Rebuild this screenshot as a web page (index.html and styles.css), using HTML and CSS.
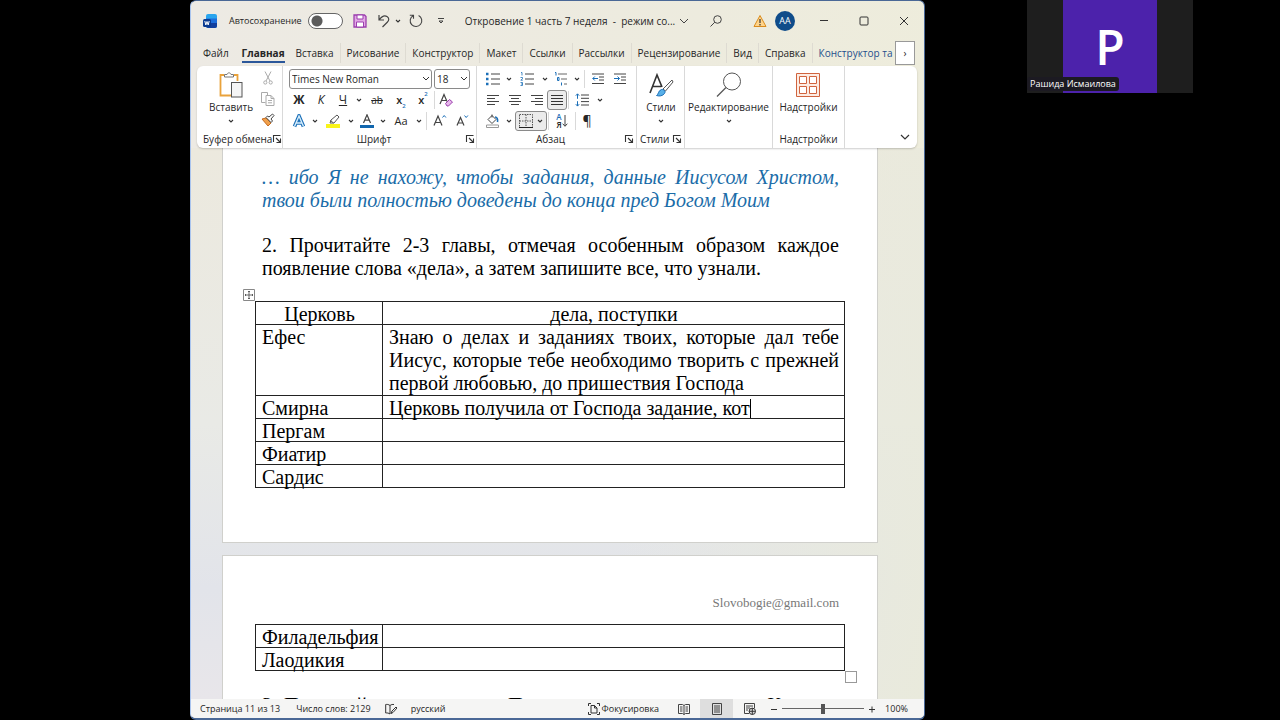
FILE: index.html
```html
<!DOCTYPE html>
<html lang="ru">
<head>
<meta charset="utf-8">
<title>Откровение 1 часть 7 неделя</title>
<link rel="stylesheet" href="styles.css">
</head>
<body>
<svg class="defs" aria-hidden="true">
  <symbol id="chev" viewBox="0 0 6 6"><path d="M1 2l2 2 2-2" fill="none" stroke="#333" stroke-width="1.1"/></symbol>
  <symbol id="launch" viewBox="0 0 10 10"><path d="M1.5 8V1.500H8.500M4 4l4 4M8.500 4.500v4h-4" fill="none" stroke="#333" stroke-width="1.1"/></symbol>
</svg>
<div class="screen">
<main class="window">
  <header class="titlebar">
    <svg class="app-logo" viewBox="0 0 14 14"><rect x="3" width="11" height="14" rx="2" fill="#2aa5ee"/><path d="M3 4.500h11V9H3z" fill="#1e6fdc"/><path d="M3 9h11v3a2 2 0 0 1-2 2H5a2 2 0 0 1-2-2z" fill="#123f9e"/><rect y="5" width="8" height="8" rx="1.500" fill="#0b3b91"/><path d="M1.800 7l1 4L4 7.500 5.200 11l1-4" fill="none" stroke="#fff"/></svg>
    <label class="autosave" for="autosave">Автосохранение</label>
    <input class="switch" type="checkbox" id="autosave">
    <button class="tb save" aria-label="Сохранить"><svg width="14" height="14" viewBox="0 0 14 14"><path d="M1 1h10.500L13 2.500V13H1z" fill="#e3a7e6" stroke="#9b3fae" stroke-width="1.300"/><path d="M4 1h6v4H4zM3.500 8h7v5h-7z" fill="#fff" stroke="#9b3fae"/></svg></button>
    <button class="tb undo" aria-label="Отменить"><svg width="14" height="14" viewBox="0 0 14 14"><path d="M2 1v5h5M2.300 5.700C5 2 8 1.200 10 2.500c2.500 1.700 2 4 .5 5.500L5.500 13" fill="none" stroke="#444" stroke-width="1.200"/></svg><svg width="6" height="6"><use href="#chev"/></svg></button>
    <button class="tb redo" aria-label="Повторить"><svg width="14" height="14" viewBox="0 0 14 14"><path d="M9.600 1.500A5.800 5.800 0 1 1 4 1.700M.8 1.300h3.700v3.500" fill="none" stroke="#444" stroke-width="1.100"/></svg></button>
    <button class="tb more" aria-label="Настройка панели"><svg width="8" height="8" viewBox="0 0 8 8"><path d="M1 1.500h6M2 4l2 2 2-2z" fill="none" stroke="#444"/></svg></button>
    <h1 class="doc-title">Откровение 1 часть 7 неделя &nbsp;-&nbsp; режим со...</h1>
    <svg class="title-chev" width="10" height="6" viewBox="0 0 10 6"><path d="M1 1l4 4 4-4" fill="none" stroke="#444"/></svg>
    <button class="tb search" aria-label="Поиск"><svg width="12" height="12" viewBox="0 0 12 12"><circle cx="7.500" cy="4.500" r="3.800" fill="none" stroke="#444"/><path d="M4.800 7.200L.5 11.500" stroke="#444"/></svg></button>
    <svg class="warn" width="14" height="14" viewBox="0 0 14 14"><path d="M7 1.500L13 12.500H1z" fill="#ffd48a" stroke="#d98b1d"/><path d="M7 5v4M7 10v1.500" stroke="#333" stroke-width="1.200"/></svg>
    <span class="avatar">АА</span>
    <div class="win-buttons">
      <button class="tb" aria-label="Свернуть"><svg width="10" height="10" viewBox="0 0 10 10"><path d="M1 4.500h8" stroke="#333"/></svg></button>
      <button class="tb" aria-label="Развернуть"><svg width="10" height="10" viewBox="0 0 10 10"><rect x="1" y="1" width="8" height="8" rx="1" fill="none" stroke="#333"/></svg></button>
      <button class="tb" aria-label="Закрыть"><svg width="10" height="10" viewBox="0 0 10 10"><path d="M1 1l8 8M9 1L1 9" stroke="#333"/></svg></button>
    </div>
  </header>

  <nav class="tabs">
    <button class="tab">Файл</button><button class="tab active"><span>Главная</span></button><button class="tab">Вставка</button><button class="tab">Рисование</button><button class="tab">Конструктор</button><button class="tab">Макет</button><button class="tab">Ссылки</button><button class="tab">Рассылки</button><button class="tab">Рецензирование</button><button class="tab">Вид</button><button class="tab">Справка</button><button class="tab context">Конструктор та</button>
    <button class="scroll" aria-label="Дальше">›</button>
  </nav>

  <section class="ribbon">
    <div class="group clipboard">
      <div class="group-body">
        <button class="big"><svg width="24" height="26" viewBox="0 0 24 26"><path d="M5 3H1.500v20.500H12M15 3h3.500v6" fill="none" stroke="#e9a23b" stroke-width="1.800"/><path d="M5.500 5V2.500H8C8.500.3 11.500.3 12 2.500h2.500V5z" fill="#fff" stroke="#777"/><rect x="12.500" y="10.500" width="10.500" height="14.500" fill="#f5f5f5" stroke="#555"/></svg><span>Вставить</span><svg class="big-chev" width="6" height="6"><use href="#chev"/></svg></button>
        <div class="stack">
          <button class="ic w24" aria-label="Вырезать"><svg width="10" height="14" viewBox="0 0 10 14"><path d="M2 .5l5 9.500M8 .5L3 10" stroke="#aaa"/><circle cx="2.300" cy="11.500" r="1.600" fill="none" stroke="#aaa"/><circle cx="7.700" cy="11.500" r="1.600" fill="none" stroke="#aaa"/></svg></button>
          <button class="ic w24" aria-label="Копировать"><svg width="14" height="14" viewBox="0 0 14 14"><path d="M4.500 10.500h-4V.5h6v3M5 3.500h5l3 3v7H5zM10 3.500v3h3M7 8.500h4M7 10.800h4" fill="none" stroke="#aaa"/></svg></button>
          <button class="ic w24" aria-label="Формат по образцу"><svg width="14" height="14" viewBox="0 0 14 14"><path d="M1 6l6 7 3-3-5-5z" fill="#f0a04c" stroke="#c76b1c"/><path d="M5 4.500l5 5 1.500-1.500-1.500-2 3-3.500L11.500 1 8 4 6.500 3z" fill="#fff" stroke="#444"/></svg></button>
        </div>
      </div>
      <div class="caption">Буфер обмена<svg width="10" height="10"><use href="#launch"/></svg></div>
    </div>

    <div class="group font">
      <div class="row combos">
        <select class="combo family" aria-label="Шрифт"><option>Times New Roman</option></select>
        <select class="combo size" aria-label="Размер"><option>18</option></select>
      </div>
      <div class="row">
        <button class="ic w20 bold">Ж</button><button class="ic w24 ital">К</button><button class="ic w20 under">Ч</button><button class="ic w12" aria-label="Вид подчеркивания"><svg width="6" height="6"><use href="#chev"/></svg></button><button class="ic w24 strike">ab</button><button class="ic w24 semi">x<sub>2</sub></button><button class="ic w20 semi">x<sup>2</sup></button><i class="sep"></i><button class="ic w20" aria-label="Очистить формат"><svg width="14" height="14" viewBox="0 0 14 14"><path d="M1 11L5 1.500l3 7M2.500 7.500H7" fill="none" stroke="#444" stroke-width="1.200"/><path d="M6.500 10.500l4-4 3 2.500-4 4h-1.500z" fill="#e6b8ea" stroke="#9b3fae"/></svg></button>
      </div>
      <div class="row">
        <button class="ic w20" aria-label="Эффекты"><svg width="14" height="14" viewBox="0 0 14 14"><path d="M2.500 12.500L7 2l4.500 10.500M4.500 9h5" fill="none" stroke="#1b6fb8" stroke-width="3.600"/><path d="M2.500 12.500L7 2l4.500 10.500M4.500 9h5" fill="none" stroke="#d6edfb" stroke-width="1.400"/></svg></button><button class="ic w12" aria-label="Список эффектов"><svg width="6" height="6"><use href="#chev"/></svg></button><button class="ic w24" aria-label="Цвет выделения"><svg width="14" height="14" viewBox="0 0 14 14"><path d="M4 9l1-3 6-5 2 2-5 6zM4.500 6.500l3 2.500" fill="none" stroke="#555"/><path d="M0 10h14v4H0z" fill="#f9f41a"/></svg></button><button class="ic w12" aria-label="Цвета выделения"><svg width="6" height="6"><use href="#chev"/></svg></button><button class="ic w20" aria-label="Цвет текста"><svg width="14" height="14" viewBox="0 0 14 14"><path d="M3.500 9L7 .8 10.500 9M4.800 6.200h4.400" fill="none" stroke="#444" stroke-width="1.200"/><path d="M0 11h14v3H0z" fill="#1267ae"/></svg></button><button class="ic w12" aria-label="Цвета текста"><svg width="6" height="6"><use href="#chev"/></svg></button><button class="ic w24 case">Aa</button><button class="ic w12" aria-label="Регистр"><svg width="6" height="6"><use href="#chev"/></svg></button><i class="sep"></i><button class="ic w24" aria-label="Увеличить шрифт"><svg width="14" height="14" viewBox="0 0 14 14"><path d="M1 11.500L5 2l4 9.500M2.300 8.500h5.400" fill="none" stroke="#444" stroke-width="1.200"/><path d="M9.500 3.500l1.700-2 1.700 2" fill="none" stroke="#1b6fb8"/></svg></button><button class="ic w20" aria-label="Уменьшить шрифт"><svg width="14" height="14" viewBox="0 0 14 14"><path d="M2 11.500L5.500 3.500 9 11.500M3.200 9h4.600" fill="none" stroke="#444" stroke-width="1.200"/><path d="M9.500 1.500l1.700 2 1.700-2" fill="none" stroke="#1b6fb8"/></svg></button>
      </div>
      <div class="caption">Шрифт<svg width="10" height="10"><use href="#launch"/></svg></div>
    </div>

    <div class="group para">
      <div class="row">
        <button class="ic w20" aria-label="Маркеры"><svg width="14" height="14" viewBox="0 0 14 14"><path d="M5 2h9M5 7h9M5 12h9" stroke="#444"/><path d="M0 .8h2.500v2.500H0zM0 5.800h2.500v2.500H0zM0 10.800h2.500v2.500H0z" fill="#1b6fb8"/></svg></button><button class="ic w12" aria-label="Стили маркеров"><svg width="6" height="6"><use href="#chev"/></svg></button><button class="ic w24" aria-label="Нумерация"><svg width="14" height="14" viewBox="0 0 14 14"><path d="M5 2h9M5 7h9M5 12h9" stroke="#444"/><path d="M1 .5h1v3M.5 5.500h2v1.300L.8 8.200h2M.5 10.500h2v3h-2M1 12h1.500" fill="none" stroke="#1b6fb8" stroke-width=".8"/></svg></button><button class="ic w12" aria-label="Стили нумерации"><svg width="6" height="6"><use href="#chev"/></svg></button><button class="ic w20" aria-label="Многоуровневый список"><svg width="14" height="14" viewBox="0 0 14 14"><path d="M4 2h9M7 7h6M10 12h3" stroke="#666"/><path d="M1 .5h1v3M3.500 5.500h1.500v3H3.500zM7.500 10.500v3" fill="none" stroke="#1b6fb8"/></svg></button><button class="ic w12" aria-label="Уровни"><svg width="6" height="6"><use href="#chev"/></svg></button><i class="sep"></i><button class="ic w24" aria-label="Уменьшить отступ"><svg width="12" height="12" viewBox="0 0 12 12"><path d="M0 1h12M7 4h5M7 7h5M0 10.500h12" stroke="#444"/><path d="M6 5.500H.8M2.800 3.500l-2 2 2 2" fill="none" stroke="#1b6fb8"/></svg></button><button class="ic w20" aria-label="Увеличить отступ"><svg width="12" height="12" viewBox="0 0 12 12"><path d="M0 1h12M7 4h5M7 7h5M0 10.500h12" stroke="#444"/><path d="M0 5.500h5.500M3.500 3.500l2 2-2 2" fill="none" stroke="#1b6fb8"/></svg></button>
      </div>
      <div class="row">
        <button class="ic w20" aria-label="По левому краю"><svg width="12" height="12" viewBox="0 0 12 12"><path d="M0 1.500h12M0 4.500h8M0 7.500h12M0 10.500h8" stroke="#444"/></svg></button><button class="ic w24" aria-label="По центру"><svg width="12" height="12" viewBox="0 0 12 12"><path d="M0 1.500h12M2 4.500h8M0 7.500h12M2 10.500h8" stroke="#444"/></svg></button><button class="ic w20" aria-label="По правому краю"><svg width="12" height="12" viewBox="0 0 12 12"><path d="M0 1.500h12M4 4.500h8M0 7.500h12M4 10.500h8" stroke="#444"/></svg></button><button class="ic w20 pressed" aria-label="По ширине"><svg width="12" height="12" viewBox="0 0 12 12"><path d="M0 1.500h12M0 4.500h12M0 7.500h12M0 10.500h12" stroke="#333"/></svg></button><i class="sep"></i><button class="ic w24" aria-label="Интервал"><svg width="14" height="14" viewBox="0 0 14 14"><path d="M6 2h8M6 5.300h8M6 8.600h8M6 12h8" stroke="#444"/><path d="M2.500 1v4.800M.8 2.700l1.700-1.900 1.700 1.900M2.500 8.200V13M.8 11.200l1.700 1.900 1.700-1.900" fill="none" stroke="#1b6fb8"/></svg></button><button class="ic w12" aria-label="Интервалы"><svg width="6" height="6"><use href="#chev"/></svg></button>
      </div>
      <div class="row">
        <button class="ic w20" aria-label="Заливка"><svg width="14" height="14" viewBox="0 0 14 14"><path d="M6 1.500l4 4-4 4-4-4zM6 .5v3" fill="none" stroke="#444"/><path d="M9 3c2 0 3 2 2.500 5" fill="none" stroke="#1b6fb8" stroke-width="1.600"/><path d="M.5 11h12v2.500H.5z" fill="#fff" stroke="#999"/></svg></button><button class="ic w12" aria-label="Цвета заливки"><svg width="6" height="6"><use href="#chev"/></svg></button><button class="ic w32 pressed" aria-label="Границы"><svg width="14" height="14" viewBox="0 0 14 14"><path d="M.5.5h13v13H.5zM7 .5v13M.5 7h13" fill="none" stroke="#555" stroke-dasharray="1.500 1"/><path d="M0 13.500h14" stroke="#222"/></svg><svg width="6" height="6"><use href="#chev"/></svg></button><i class="sep"></i><button class="ic w24 sort" aria-label="Сортировка"><span>А<br>Я</span><svg width="6" height="14" viewBox="0 0 6 14"><path d="M3 1v11M.7 9.700L3 12.300l2.300-2.600" fill="none" stroke="#444"/></svg></button><i class="sep"></i><button class="ic w20 pilcrow">¶</button>
      </div>
      <div class="caption">Абзац<svg width="10" height="10"><use href="#launch"/></svg></div>
    </div>

    <div class="group styles">
      <div class="group-body">
        <button class="big"><svg width="26" height="26" viewBox="0 0 26 26"><path d="M2 21L9 3l5 12M5 14.500h8" fill="none" stroke="#333" stroke-width="1.600"/><path d="M15 17l9-9 1 2-7.500 9z" fill="#fff" stroke="#555"/><path d="M8.500 23.500c2-.5 1.500-5 5-6 2.500-.5 4.500 2 3 4-2 2.500-5 3-8 2z" fill="#58b0e8" stroke="#1b6fb8"/></svg><span>Стили</span><svg class="big-chev" width="6" height="6"><use href="#chev"/></svg></button>
      </div>
      <div class="caption">Стили<svg width="10" height="10"><use href="#launch"/></svg></div>
    </div>

    <div class="group edit">
      <div class="group-body">
        <button class="big"><svg width="26" height="26" viewBox="0 0 26 26"><circle cx="16" cy="9.500" r="8.500" fill="none" stroke="#555"/><path d="M10 15.500L1 24.500" stroke="#555" stroke-width="1.200"/></svg><span>Редактирование</span><svg class="big-chev" width="6" height="6"><use href="#chev"/></svg></button>
      </div>
    </div>

    <div class="group addins">
      <div class="group-body">
        <button class="big"><svg width="26" height="26" viewBox="0 0 26 26"><path d="M1.500 1.500h23v23h-23z" fill="#fdece3" stroke="#d0643f"/><path d="M4.500 4.500h7v7h-7zM14.500 4.500h7v7h-7zM4.500 14.500h7v7h-7zM14.500 14.500h7v7h-7z" fill="#fff" stroke="#d0643f"/></svg><span>Надстройки</span></button>
      </div>
      <div class="caption">Надстройки</div>
    </div>
    <button class="collapse" aria-label="Свернуть ленту"><svg width="10" height="6" viewBox="0 0 10 6"><path d="M1 1l4 4 4-4" fill="none" stroke="#333" stroke-width="1.200"/></svg></button>
  </section>

  <section class="canvas">
    <article class="page first">
      <p class="answer">… ибо Я не нахожу, чтобы задания, данные Иисусом Христом, твои были полностью доведены до конца пред Богом Моим</p>
      <p>2. Прочитайте 2-3 главы, отмечая особенным образом каждое появление слова «дела», а затем запишите все, что узнали.</p>
      <div class="table-wrap">
        <svg class="move" width="12" height="12" viewBox="0 0 12 12"><path d="M.5.5h11v11H.5z" fill="#fff" stroke="#888"/><path d="M6 2v8M2 6h8M5 3l1-1 1 1M5 9l1 1 1-1M3 5L2 6l1 1M9 5l1 1-1 1" fill="none" stroke="#444" stroke-width=".8"/></svg>
        <table>
          <tr><th>Церковь</th><th>дела, поступки</th></tr>
          <tr class="tall"><td>Ефес</td><td>Знаю о делах и заданиях твоих, которые дал тебе Иисус, которые тебе необходимо творить с прежней первой любовью, до пришествия Господа</td></tr>
          <tr><td>Смирна</td><td>Церковь получила от Господа задание, кот<span class="caret"></span></td></tr>
          <tr><td>Пергам</td><td></td></tr>
          <tr><td>Фиатир</td><td></td></tr>
          <tr><td>Сардис</td><td></td></tr>
        </table>
      </div>
    </article>
    <article class="page second">
      <div class="page-header">Slovobogie@gmail.com</div>
      <div class="table-wrap">
        <table>
          <tr><td>Филадельфия</td><td></td></tr>
          <tr><td>Лаодикия</td><td></td></tr>
        </table>
        <i class="resize"></i>
      </div>
      <p class="next">3. Прочитайте внимательно Послание апостола, отметьте Книги и запишите</p>
    </article>
  </section>

  <footer class="status">
    <span class="pages">Страница 11 из 13</span>
    <span class="words">Число слов: 2129</span>
    <button class="ic proof" aria-label="Правописание"><svg width="12" height="12" viewBox="0 0 12 12"><path d="M5 2.500C3.500 1.300 2 1.300.7 1.500v8.500c1.500-.2 3 0 4.300 1M5 2.500v8.500M5 2.500c1.300-1 2.500-1.200 4-1M6 10.500l1-2.500 4-4 1 1-4 4.500z" fill="none" stroke="#333"/></svg></button>
    <span class="lang">русский</span>
    <button class="focus"><svg width="12" height="12" viewBox="0 0 12 12"><path d="M.5 3V.5H3M9 .5h2.500V3M.5 9v2.500H3M9 11.500h2.500V9" fill="none" stroke="#333"/><path d="M3 2.500h3.500L9 5v5H3zM6.500 2.500V5H9" fill="none" stroke="#333"/></svg>Фокусировка</button>
    <div class="views">
      <button class="view" aria-label="Чтение"><svg width="12" height="12" viewBox="0 0 12 12"><path d="M.5 1.500h4L6 2.500l1.500-1h4v9h-4l-1.500 1-1.500-1h-4zM6 2.500v9M2 4h2.500M2 6h2.500M2 8h2.500M7.500 4H10M7.500 6H10M7.500 8H10" fill="none" stroke="#444"/></svg></button>
      <button class="view current" aria-label="Разметка"><svg width="12" height="12" viewBox="0 0 12 12"><path d="M1.500.5h9v11h-9zM3 3h6M3 5h6M3 7h6M3 9h6" fill="none" stroke="#444"/></svg></button>
      <button class="view" aria-label="Веб-документ"><svg width="12" height="12" viewBox="0 0 12 12"><path d="M5 10.500H.5V.5h10V5M2 3h7M2 5h4M2 7h2" fill="none" stroke="#444"/><circle cx="8.300" cy="8.300" r="3.200" fill="#ddd" stroke="#333"/><path d="M5 8.300h6.500M8.300 5v6.500" stroke="#333"/></svg></button>
    </div>
    <button class="zoom-step" aria-label="Мельче"><svg width="6" height="8" viewBox="0 0 6 8"><path d="M0 4.500h6" stroke="#333"/></svg></button>
    <input class="zoom" type="range" min="0" max="100" value="50" aria-label="Масштаб">
    <button class="zoom-step" aria-label="Крупнее"><svg width="6" height="8" viewBox="0 0 6 8"><path d="M0 4.500h6M3 1.500v6" stroke="#333"/></svg></button>
    <span class="percent">100%</span>
  </footer>
</main>

<aside class="participant">
  <div class="portrait">P</div>
  <div class="name">Рашида Исмаилова</div>
</aside>
</div>
</body>
</html>
```
FILE: styles.css
```css
* { box-sizing: border-box; }
html, body { margin: 0; height: 100%; background: #000; }
body { font: 10px/14px "Open Sans", "Noto Sans", sans-serif; color: #262626; overflow: hidden; }
button { font: inherit; color: inherit; background: none; border: 0; padding: 0; margin: 0; }
svg { display: block; flex: none; }
.defs { position: absolute; width: 0; height: 0; }

.screen {
  display: grid;
  grid-template-columns: 190fr minmax(0, 735fr) 102fr minmax(0, 166fr) 87fr;
  height: 100vh;
}
.window {
  grid-column: 2;
  display: flex;
  flex-direction: column;
  min-height: 0;
  overflow: hidden;
  border: solid #4a6896;
  border-width: 1px 1px 2px;
  border-left-color: #a9c4ee;
  border-radius: 6px;
  background: linear-gradient(100deg, #edeae4, #edebde 60%, #eeeddb);
}

/* Title bar */
.titlebar { display: flex; align-items: center; height: 39px; padding-left: 12px; white-space: nowrap; flex: none; }
.app-logo { width: 14px; height: 14px; margin-right: 12px; }
.autosave { margin-right: 6px; font-size: 9px; }
.switch {
  appearance: none; margin: 0 10px 0 0; width: 35px; height: 16px; flex: none;
  border: 1px solid #666; border-radius: 8px;
  background: radial-gradient(circle at 8px 7px, #5c5c5c 5px, #fff 6px);
}
.tb { display: flex; align-items: center; justify-content: center; flex: none; }
.save { margin-right: 10px; }
.undo { gap: 4px; margin-right: 8px; }
.redo { margin-right: 14px; }
.more { margin-right: 20px; }
.doc-title { font: inherit; margin: 0 4px 0 0; overflow: hidden; }
.search { margin: 0 31px 0 auto; }
.warn { margin-right: 8px; }
.avatar { width: 20px; height: 20px; border-radius: 50%; background: #0f4c8a; color: #fff; font-size: 9px; line-height: 20px; text-align: center; flex: none; }
.win-buttons { display: flex; gap: 30px; margin: 0 15px 0 24px; }

/* Ribbon tabs */
.tabs { display: flex; align-items: center; height: 26px; padding-left: 6px; flex: none; white-space: nowrap; overflow: hidden; }
.tab { padding: 0 6px; height: 20px; border-right: 1px solid #dedbd2; flex: none; }
.tab:nth-child(-n+2), .tab.context { border-right-color: transparent; }
.tab.active { font-weight: 700; padding: 0 4px 0 6px; }
.tab.active span { display: block; border-bottom: 2px solid #2b579a; height: 20px; line-height: 20px; }
.tab.context { color: #1f4e8c; padding: 0; margin-left: 6px; }
.scroll { width: 20px; height: 24px; border: 1px solid #999; background: #fff; margin: 0 9px 0 auto; flex: none; }

/* Ribbon */
.ribbon { display: flex; height: 82px; margin: 0 7px 0 6px; background: #fff; border-radius: 6px; box-shadow: 0 1px 2px #0003; flex: none; z-index: 1; }
.group { display: flex; flex-direction: column; padding: 2px 6px 0; border-right: 1px solid #d9d9d9; }
.row, .group-body { display: flex; align-items: center; flex: none; }
.row { height: 21px; }
.group-body { height: 63px; justify-content: center; }
.caption { display: flex; align-items: center; justify-content: center; position: relative; height: 16px; white-space: nowrap; }
.font .caption, .para .caption { padding-right: 16px; }
.font .caption svg, .para .caption svg { position: absolute; right: 0; }
.clipboard .caption, .styles .caption { justify-content: space-between; }
.clipboard { width: 86px; padding-right: 2px; }
.clipboard .group-body { justify-content: space-between; }
.font { width: 194px; padding-right: 1px; }
.para { width: 160px; padding-right: 2px; }
.styles { width: 48px; padding: 2px 2px 0 3px; }
.edit { width: 88px; }
.addins { width: 72px; }
.big { display: flex; flex-direction: column; align-items: center; height: 60px; padding-top: 2px; white-space: nowrap; }
.clipboard .big { padding-left: 6px; }
.big span { margin-top: 2px; }
.big-chev { margin-top: 4px; }
.stack { display: grid; grid-auto-rows: 21px; }
.combos { gap: 2px; }
.combo {
  appearance: none; height: 20px; padding: 0 2px; border: 1px solid #8a8a8a; border-radius: 3px; color: #262626; font: inherit;
  background: #fff;
  background-image: linear-gradient(-45deg, transparent 40%, #333 40% 60%, transparent 60%), linear-gradient(45deg, transparent 40%, #333 40% 60%, transparent 60%);
  background-size: 3px 3px; background-repeat: no-repeat; background-position: right 2px center, right 5px center;
}
.family { width: 143px; }
.size { width: 36px; }
.ic { display: flex; align-items: center; justify-content: center; height: 20px; flex: none; }
.w12 { width: 12px; }
.w20 { width: 20px; }
.w24 { width: 24px; }
.w32 { width: 32px; gap: 4px; }
.bold { font-size: 12px; font-weight: 700; }
.ital { font-size: 12px; font-style: italic; }
.under { font-size: 12px; text-decoration: underline; }
.strike { text-decoration: line-through; }
.case { font-size: 11px; }
.semi { font-size: 11px; font-weight: 600; }
.semi sub, .semi sup { font-size: 6px; line-height: 8px; color: #1b6fb8; }
.semi sub { align-self: flex-end; }
.semi sup { align-self: flex-start; }
.sep { width: 1px; height: 18px; margin: 0 1px; background: #d9d9d9; }
.pressed { border: 1px solid #8a8a8a; border-radius: 3px; background: #ebebeb; }
.sort span { font-size: 8px; line-height: 8px; font-weight: 600; }
.sort span::first-line { color: #1b6fb8; }
.pilcrow { font-size: 14px; }
.collapse { align-self: flex-end; margin: 0 7px 8px auto; }

/* Document */
.canvas {
  flex: 1; min-height: 0; overflow: hidden; padding: 0 46px 0 31px;
  background: linear-gradient(100deg, transparent 60%, #e9eadc), linear-gradient(#ece9de, #e9eae6 50%, #e2e4ea 80%, #e8e6ea);
}
.page { padding: 0 38px 0 39px; border: 1px solid #d0d0cc; background: #fff; font: 20px/23px "Liberation Serif", "Times New Roman", serif; color: #000; }
.first { height: 395px; border-top: 0; padding-top: 18px; margin-bottom: 12px; }
.page p { margin: 0 0 22px; text-align: justify; }
.page .answer { color: #1a6ca8; font-style: italic; }
.table-wrap { position: relative; margin: 0 -6px 0 -7px; }
.first .table-wrap { margin-top: -1px; }
table { width: 100%; border-collapse: collapse; table-layout: fixed; }
th, td { border: 1px solid #222; padding: 3px 5px 0 6px; height: 23px; line-height: 19px; font-weight: 400; text-align: left; vertical-align: top; }
th { text-align: center; }
th:first-child, td:first-child { width: 127px; }
.tall td { padding-top: 1px; line-height: 23px; text-align: justify; }
.caret { display: inline-block; width: 1px; height: 19px; background: #000; vertical-align: bottom; }
.move { position: absolute; left: -12px; top: -12px; }
.resize { position: absolute; right: -12px; top: 100%; width: 12px; height: 12px; border: 1px solid #999; background: #fff; }
.page-header { padding: 35px 0 10px; font-size: 13px; text-align: right; color: #777; }
.page .next { margin: 23px 0 0; }

/* Status bar */
.status { display: flex; align-items: center; height: 19px; padding: 0 16px 0 9px; background: #f5f5f4; white-space: nowrap; flex: none; font-size: 9px; }
.words { margin-left: 16px; }
.proof { margin: 0 14px; }
.focus { display: flex; align-items: center; gap: 2px; margin-left: auto; }
.views { display: flex; margin: 0 5px 0 8px; }
.view { display: flex; align-items: center; justify-content: center; width: 33px; height: 19px; }
.current { background: #dedede; }
.zoom { appearance: none; width: 82px; height: 12px; margin: 0 5px; background: linear-gradient(#666, #666) center / 100% 1px no-repeat; }
.zoom::-webkit-slider-thumb { appearance: none; width: 4px; height: 10px; background: #555; }
.percent { margin-left: 10px; }

/* Call participant */
.participant { grid-column: 4; position: relative; height: 93px; background: #1e1e1e; display: flex; justify-content: center; }
.portrait { width: 94px; background: #4c22ab; color: #fff; font: 600 48px/93px "Open Sans", sans-serif; text-align: center; }
.name { position: absolute; left: 0; bottom: 2px; padding: 0 3px; border-radius: 3px; background: #1c1a22; color: #fff; white-space: nowrap; font-size: 9px; }
```
